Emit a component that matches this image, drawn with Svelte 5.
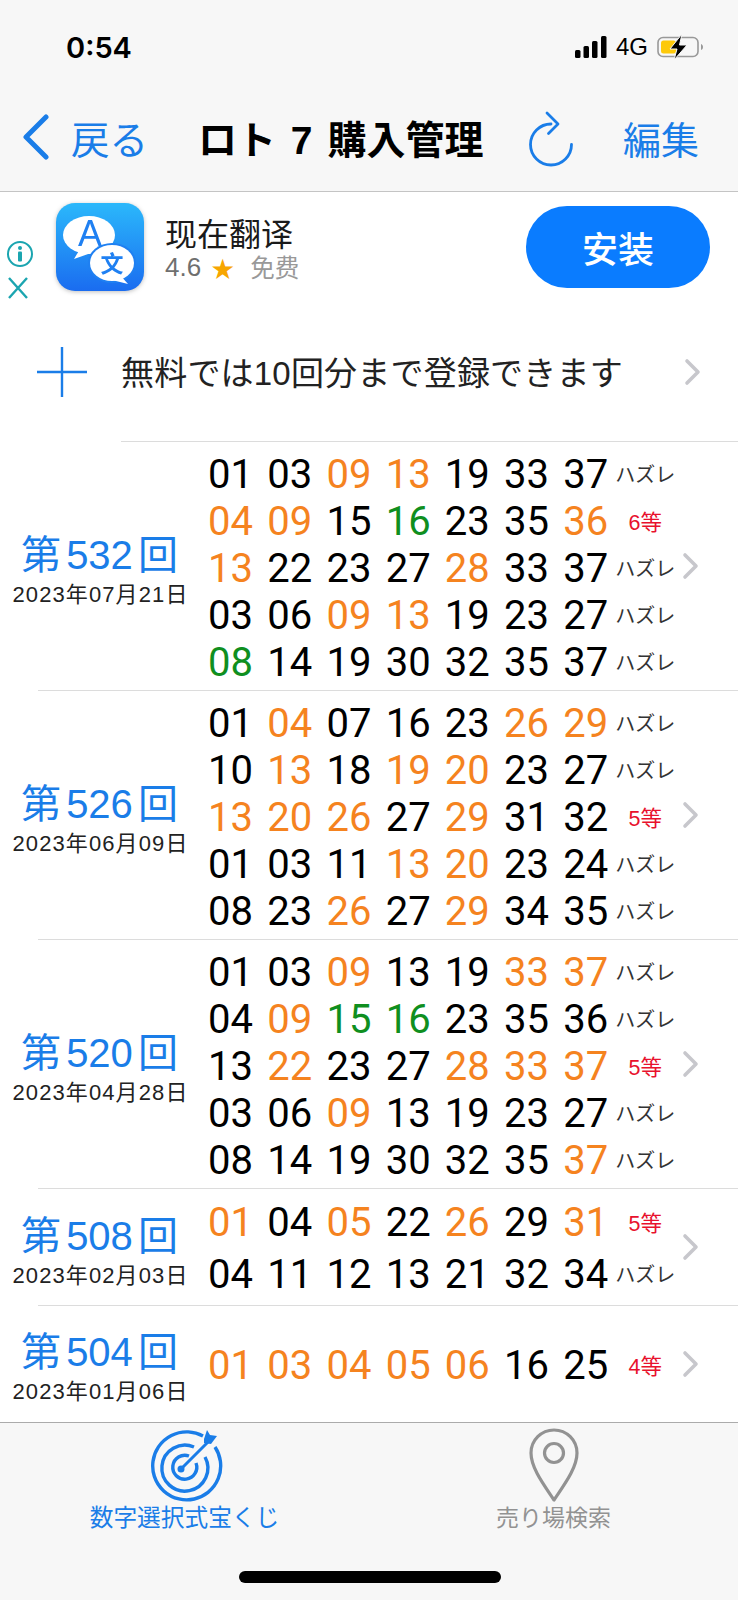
<script>
  const rows = [
    { title: '532', date: ['07', '21'], lines: [
      ['01 03 09o 13o 19 33 37', 'x'], ['04o 09o 15 16g 23 35 36o', '6'], ['13o 22 23 27 28o 33 37', 'x'], ['03 06 09o 13o 19 23 27', 'x'], ['08g 14 19 30 32 35 37', 'x'] ] },
    { title: '526', date: ['06', '09'], lines: [
      ['01 04o 07 16 23 26o 29o', 'x'], ['10 13o 18 19o 20o 23 27', 'x'], ['13o 20o 26o 27 29o 31 32', '5'], ['01 03 11 13o 20o 23 24', 'x'], ['08 23 26o 27 29o 34 35', 'x'] ] },
    { title: '520', date: ['04', '28'], lines: [
      ['01 03 09o 13 19 33o 37o', 'x'], ['04 09o 15g 16g 23 35 36', 'x'], ['13 22o 23 27 28o 33o 37o', '5'], ['03 06 09o 13 19 23 27', 'x'], ['08 14 19 30 32 35 37o', 'x'] ] },
    { title: '508', date: ['02', '03'], two: true, lines: [
      ['01o 04 05o 22 26o 29 31o', '5'], ['04 11 12 13 21 32 34', 'x'] ] },
    { title: '504', date: ['01', '06'], one: true, lines: [
      ['01o 03o 04o 05o 06o 16 25', '4'] ] }
  ];
  const parse = (s) => s.split(' ').map((t) => ({ n: t.slice(0, 2), c: t[2] || 'k' }));
</script>

<div class="phone">
  <header class="top">
    <div class="status">
      <span class="time">0:54</span>
      <div class="sys">
        <svg class="signal" width="32" height="22" viewBox="0 0 32 22"><rect x="0" y="14" width="5.5" height="8" rx="1.5"/><rect x="8.5" y="10" width="5.5" height="12" rx="1.5"/><rect x="17" y="5" width="5.5" height="17" rx="1.5"/><rect x="26" y="0" width="5.5" height="22" rx="1.5"/></svg>
        <span class="net">4G</span>
        <svg class="batt" width="46" height="26" viewBox="0 0 46 26"><rect x="1" y="3.5" width="40" height="19" rx="5" fill="none" stroke="#999" stroke-width="1.6"/><rect x="4" y="6.5" width="15" height="13" rx="2.5" fill="#fdc90a"/><path d="M44 10v6c1.300-.5 2-1.500 2-3s-.7-2.500-2-3z" fill="#999"/><path d="M25 0 13 15h7l-3 11 13-15h-7.500z" fill="#000" stroke="#f7f7f7" stroke-width="1"/></svg>
      </div>
    </div>
    <nav class="nav">
      <div class="back">
        <svg width="28" height="46" viewBox="0 0 28 46"><path d="M25 3 5 23l20 20" fill="none" stroke="#1a7de8" stroke-width="5" stroke-linecap="round" stroke-linejoin="round"/></svg>
        <span>戻る</span>
      </div>
      <h1>ロト 7 購入管理</h1>
      <svg class="refresh" width="46" height="56" viewBox="0 0 46 56"><path d="M23 13A20.500 20.500 0 1 0 43.500 33.500" fill="none" stroke="#1a7de8" stroke-width="2.800" stroke-linecap="round"/><path d="M19 2l11 11-9.500 9.500" fill="none" stroke="#1a7de8" stroke-width="2.800" stroke-linecap="round" stroke-linejoin="round"/></svg>
      <span class="edit">編集</span>
    </nav>
  </header>

  <main class="content">
    <section class="ad">
      <div class="adflags">
        <svg width="28" height="28" viewBox="0 0 28 28"><circle cx="14" cy="14" r="12" fill="none" stroke="#1ba5b0" stroke-width="2"/><circle cx="14" cy="8" r="2" fill="#1ba5b0"/><rect x="12" y="11.500" width="4" height="10" rx="1" fill="#1ba5b0"/></svg>
        <svg width="24" height="24" viewBox="0 0 24 24"><path d="M3 2l18 20M21 2 3 22" stroke="#1ba5b0" stroke-width="2.400" fill="none"/></svg>
      </div>
      <svg class="appicon" width="88" height="88" viewBox="0 0 88 88">
        <defs><linearGradient id="g" x1="0" y1="0" x2="0" y2="1"><stop offset="0" stop-color="#2bb8fb"/><stop offset="1" stop-color="#1a6cf0"/></linearGradient></defs>
        <rect width="88" height="88" rx="19" fill="url(#g)"/>
        <ellipse cx="33" cy="32" rx="26" ry="19" fill="#fff"/><path d="M24 46l-6 10 17-6z" fill="#fff"/>
        <ellipse cx="56" cy="60" rx="24" ry="20" fill="#1f80f2"/>
        <ellipse cx="56" cy="60" rx="22" ry="18" fill="#fff"/><path d="M64 72l8 9-16-4z" fill="#fff"/>
        <text x="34" y="43" class="ica">A</text>
        <text x="56" y="69" class="icb">文</text>
      </svg>
      <div class="adtext">
        <div class="adname">现在翻译</div>
        <div class="adrate"><span class="score">4.6</span><span class="star">★</span><span class="free">免费</span></div>
      </div>
      <div class="install">安装</div>
    </section>

    <section class="add">
      <svg class="plus" width="50" height="50" viewBox="0 0 50 50"><path d="M0 25h50M25 0v50" stroke="#1a7de8" stroke-width="2.400"/></svg>
      <span class="addtext">無料では10回分まで登録できます</span>
      <svg class="chev" width="18" height="28" viewBox="0 0 18 28"><path d="M3 3l11 11L3 25" fill="none" stroke="#c7c7cc" stroke-width="3.600" stroke-linecap="round" stroke-linejoin="round"/></svg>
    </section>

    {#each rows as r, i}
      <div class="sep" class:first={i === 0}></div>
      <section class="row" class:two={r.two} class:one={r.one}>
        <div class="head">
          <div class="title">第 {r.title} 回</div>
          <div class="date">2023年{r.date[0]}月{r.date[1]}日</div>
        </div>
        <div class="lines">
          {#each r.lines as l}
            <div class="line">
              {#each parse(l[0]) as c}
                <span class="num {c.c}">{c.n}</span>
              {/each}
              {#if l[1] === 'x'}
                <span class="res">ハズレ</span>
              {:else}
                <span class="res win">{l[1]}等</span>
              {/if}
            </div>
          {/each}
        </div>
        <svg class="chev" width="18" height="28" viewBox="0 0 18 28"><path d="M3 3l11 11L3 25" fill="none" stroke="#c7c7cc" stroke-width="3.600" stroke-linecap="round" stroke-linejoin="round"/></svg>
      </section>
    {/each}
  </main>

  <footer class="tabs">
    <div class="tabrow">
      <div class="tab active">
        <svg width="76" height="76" viewBox="0 0 76 76">
          <g fill="none" stroke="#1a7de8" stroke-width="3.400">
            <path d="M56 9A34 34 0 1 0 68 20"/>
            <path d="M47 20A23 23 0 1 0 58 30"/>
            <path d="M42 29A12 12 0 1 0 49 36"/>
            <path d="M33 43 62 14" stroke-width="3"/>
          </g>
          <circle cx="34" cy="42" r="3.500" fill="#1a7de8"/>
          <path d="M57 12l3-9 3 5 7 1-6 8-7-1z" fill="#1a7de8"/>
        </svg>
        <span>数字選択式宝くじ</span>
      </div>
      <div class="tab">
        <svg width="52" height="76" viewBox="0 0 52 76"><path d="M26 73C16 58 3 41 3 26a23 23 0 0 1 46 0c0 15-13 32-23 47z" fill="none" stroke="#929292" stroke-width="3.200" stroke-linejoin="round"/><circle cx="26" cy="26" r="9.500" fill="none" stroke="#929292" stroke-width="3.200"/></svg>
        <span class="store">売り場検索</span>
      </div>
    </div>
    <div class="homebar"></div>
  </footer>
</div>

<style>
  :global(body) { margin: 0; background: #fff; }
  .phone {
    width: 738px; height: 1600px; display: flex; flex-direction: column; overflow: hidden;
    font-family: "Liberation Sans", "Noto Sans CJK JP", sans-serif; color: #000;
  }
  .top { height: 192px; background: #f7f7f7; border-bottom: 1px solid #c4c4c4; box-sizing: border-box; flex: none; }
  .status { height: 94px; display: flex; align-items: center; justify-content: space-between; padding: 0 35px 0 66px; box-sizing: border-box; }
  .time { font-family: Inter, sans-serif; font-size: 29px; font-weight: 600; }
  .sys { display: flex; align-items: center; gap: 9px; }
  .signal { fill: #000; }
  .net { font-size: 24px; }
  .nav { height: 94px; display: flex; align-items: center; padding: 0 39px 8px 21px; box-sizing: border-box; }
  .back { display: flex; align-items: center; gap: 22px; color: #1a7de8; font-size: 38.500px; }
  .nav h1 { margin: 0 0 0 50px; font-size: 39px; font-weight: 700; white-space: pre; word-spacing: 4px; }
  .refresh { margin-left: 45px; margin-top: 3px; }
  .edit { margin-left: auto; font-size: 38px; color: #1a7de8; }
  .content { flex: 1; min-height: 0; background: #fff; }
  .ad { height: 106px; display: flex; align-items: center; padding-right: 28px; box-sizing: border-box; }
  .adflags { width: 56px; display: flex; flex-direction: column; align-items: flex-start; padding: 50px 0 0 6px; box-sizing: border-box; gap: 8px; }
  .appicon { margin-top: 4px; filter: drop-shadow(0 1px 2px rgba(0,0,0,.25)); }
  .ica { font-size: 36px; fill: #1f80f2; text-anchor: middle; font-family: "Liberation Sans", sans-serif; }
  .icb { font-size: 23px; font-weight: 700; fill: #1f80f2; text-anchor: middle; font-family: "Noto Sans CJK SC", sans-serif; }
  .adtext { margin-left: 21px; margin-top: 4px; }
  .adname { font-size: 32px; line-height: 40px; font-family: "Noto Sans CJK SC", sans-serif; color: #1a1a1a; }
  .adrate { display: flex; align-items: center; font-size: 24.500px; line-height: 30px; color: #6f6f6f; font-family: "Noto Sans CJK SC", sans-serif; }
  .score { font-family: "Liberation Sans", sans-serif; font-size: 26px; }
  .star { color: #f7a600; margin-left: 10px; font-size: 23px; }
  .free { color: #999; margin-left: 16px; }
  .install {
    margin-left: auto; width: 184px; height: 82px; border-radius: 41px; background: #0a7cff; color: #fff;
    font-size: 36px; display: flex; align-items: center; justify-content: center; margin-top: 4px;
    font-family: "Noto Sans CJK SC", sans-serif; font-weight: 500;
  }
  .add { height: 143px; display: flex; align-items: center; padding: 0 36px 0 37px; box-sizing: border-box; }
  .addtext { margin-left: 34px; font-size: 33px; letter-spacing: .2px; color: #222; white-space: nowrap; margin-top: 2px; }
  .add .chev { margin-left: auto; margin-top: 4px; }
  .plus { width: 50px; height: 50px; margin-top: 4px; }
  .sep { height: 1px; background: #dcdcdc; margin-left: 38px; }
  .sep.first { margin-left: 121px; }
  .row { display: flex; align-items: center; height: 248px; }
  .row.two { height: 116px; }
  .row.one { height: 115px; }
  .head { width: 201px; flex: none; text-align: center; padding-top: 8px; box-sizing: border-box; }
  .title { color: #1a7de8; font-size: 40px; line-height: 48px; word-spacing: -6px; white-space: nowrap; margin-left: -2px; }
  .date { font-size: 22px; line-height: 31px; letter-spacing: 1.100px; color: #222; white-space: nowrap; }
  .lines { display: flex; flex-direction: column; }
  .line { display: grid; grid-template-columns: repeat(7, 59.2px) 60px; align-items: center; height: 47px; }
  .two .line { height: 52px; }
  .num { font-family: Roboto, sans-serif; font-size: 40px; text-align: center; line-height: 47px; padding-top: 2px; }
  .num.o { color: #f5831f; }
  .num.g { color: #0f8f1f; }
  .res { font-size: 20px; text-align: center; color: #333; white-space: nowrap; }
  .res.win { color: #e8112d; font-size: 21.500px; }
  .row .chev { margin-left: 7px; }
  .tabs { height: 178px; flex: none; background: #f7f7f7; border-top: 1px solid #ababab; box-sizing: border-box; position: relative; }
  .tabrow { display: flex; padding-top: 4px; }
  .tab { display: flex; flex-direction: column; align-items: center; color: #929292; font-size: 23.700px; line-height: 30px; width: 369px; }
  .tab.active { color: #1a7de8; }
  .tab .store { font-size: 23px; }
  .tab svg { display: block; }
  .homebar { position: absolute; left: 239px; top: 148px; width: 262px; height: 12px; border-radius: 6px; background: #000; }
</style>
